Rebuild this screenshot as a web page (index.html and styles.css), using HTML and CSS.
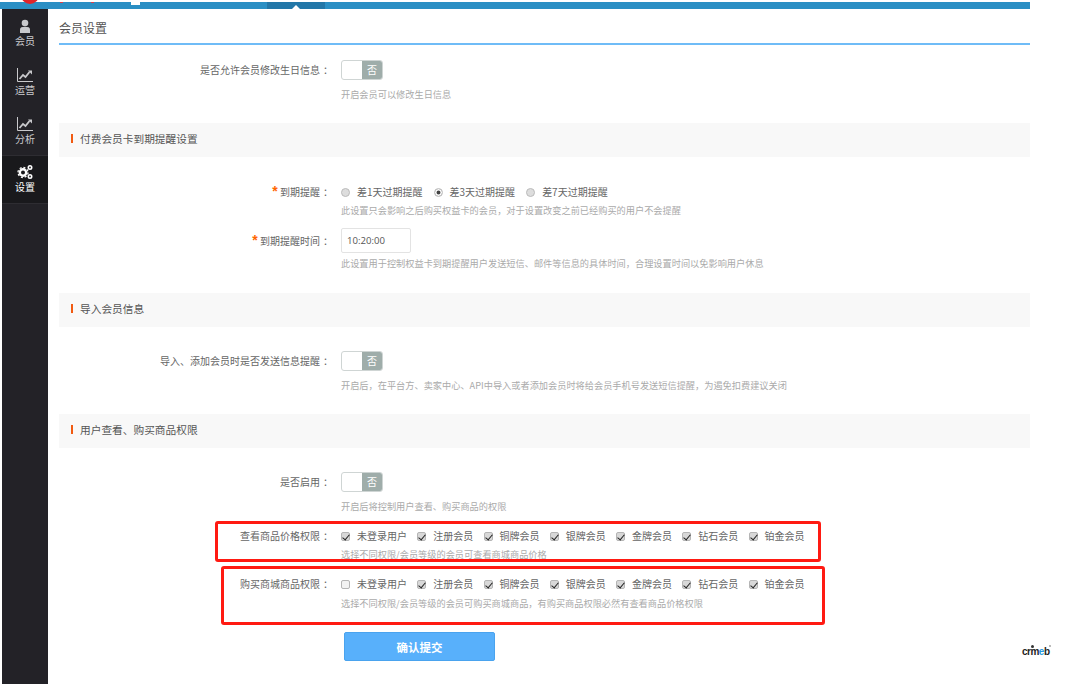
FILE: index.html
```html
<!DOCTYPE html>
<html lang="zh-CN">
<head>
  <meta charset="UTF-8" />
  <title>会员设置</title>
  <link rel="stylesheet" href="styles.css">
</head>
<body>
  <div class="topbar">
    <span class="logo-dot"></span>
    <span class="logo-bit logo-bit-a"></span>
    <span class="logo-bit logo-bit-b"></span>
    <span class="menu-bit"></span>
    <span class="tab-active"><i class="tab-notch"></i></span>
  </div>

  <div class="layout">
    <div class="sidebar">
      <div class="side-item">
        <svg class="side-icon" viewBox="0 0 16 16"><circle cx="8" cy="5" r="3.300" fill="#c9c9cc"/><path d="M3 15v-3.500C3 9.500 4.800 8.800 8 8.800s5 .7 5 2.700V15z" fill="#c9c9cc"/></svg>
        <span>会员</span>
      </div>
      <div class="side-item">
        <svg class="side-icon" viewBox="0 0 16 16"><path d="M.5 1v13.500H16" fill="none" stroke="#c9c9cc" stroke-width="1"/><path d="M2.500 12l3.500-4 2.500 2 4-5" fill="none" stroke="#c9c9cc" stroke-width="1.800"/><path d="M11 3.500h4v4z" fill="#c9c9cc"/></svg>
        <span>运营</span>
      </div>
      <div class="side-item">
        <svg class="side-icon" viewBox="0 0 16 16"><path d="M.5 1v13.500H16" fill="none" stroke="#c9c9cc" stroke-width="1"/><path d="M2.500 12l3.500-4 2.500 2 4-5" fill="none" stroke="#c9c9cc" stroke-width="1.800"/><path d="M11 3.500h4v4z" fill="#c9c9cc"/></svg>
        <span>分析</span>
      </div>
      <div class="side-item side-item-on">
        <svg class="side-icon" viewBox="0 0 16 16">
          <circle cx="6" cy="8.500" r="3.200" fill="none" stroke="#fff" stroke-width="2.400"/>
          <circle cx="6" cy="8.500" r="5" fill="none" stroke="#fff" stroke-width="1.300" stroke-dasharray="2 1.900"/>
          <circle cx="13" cy="3.500" r="1.700" fill="none" stroke="#fff" stroke-width="1.600"/>
          <circle cx="13" cy="12.500" r="1.700" fill="none" stroke="#fff" stroke-width="1.600"/>
        </svg>
        <span>设置</span>
      </div>
    </div>

    <div class="main">
      <div class="page-title">会员设置</div>

      <div class="form-row row-first">
        <div class="label">是否允许会员修改生日信息<span class="colon">：</span></div>
        <div class="field">
          <div class="switch"><span class="switch-knob"></span><span class="switch-text">否</span></div>
          <div class="help help-switch">开启会员可以修改生日信息</div>
        </div>
      </div>

      <div class="section-head"><span>付费会员卡到期提醒设置</span></div>

      <div class="form-row row-radio">
        <div class="label label-opts"><em>*</em> 到期提醒<span class="colon">：</span></div>
        <div class="field">
          <div class="options">
            <label class="opt-radio"><i class="radio"></i>差1天过期提醒</label>
            <label class="opt-radio"><i class="radio radio-on"></i>差3天过期提醒</label>
            <label class="opt-radio"><i class="radio"></i>差7天过期提醒</label>
          </div>
          <div class="help help-opts">此设置只会影响之后购买权益卡的会员，对于设置改变之前已经购买的用户不会提醒</div>
        </div>
      </div>

      <div class="form-row row-time">
        <div class="label label-input"><em>*</em> 到期提醒时间<span class="colon">：</span></div>
        <div class="field">
          <div class="time-input">10:20:00</div>
          <div class="help help-time">此设置用于控制权益卡到期提醒用户发送短信、邮件等信息的具体时间，合理设置时间以免影响用户休息</div>
        </div>
      </div>

      <div class="section-head head-import"><span>导入会员信息</span></div>

      <div class="form-row row-import">
        <div class="label">导入、添加会员时是否发送信息提醒<span class="colon">：</span></div>
        <div class="field">
          <div class="switch"><span class="switch-knob"></span><span class="switch-text">否</span></div>
          <div class="help help-switch">开启后，在平台方、卖家中心、API中导入或者添加会员时将给会员手机号发送短信提醒，为遏免扣费建议关闭</div>
        </div>
      </div>

      <div class="section-head head-perm"><span>用户查看、购买商品权限</span></div>

      <div class="form-row row-enable">
        <div class="label">是否启用<span class="colon">：</span></div>
        <div class="field">
          <div class="switch"><span class="switch-knob"></span><span class="switch-text">否</span></div>
          <div class="help help-switch">开启后将控制用户查看、购买商品的权限</div>
        </div>
      </div>

      <div class="form-row row-view">
        <div class="label label-opts">查看商品价格权限<span class="colon">：</span></div>
        <div class="field">
          <div class="options">
            <label class="opt-check"><i class="check check-on"></i>未登录用户</label>
            <label class="opt-check"><i class="check check-on"></i>注册会员</label>
            <label class="opt-check"><i class="check check-on"></i>铜牌会员</label>
            <label class="opt-check"><i class="check check-on"></i>银牌会员</label>
            <label class="opt-check"><i class="check check-on"></i>金牌会员</label>
            <label class="opt-check"><i class="check check-on"></i>钻石会员</label>
            <label class="opt-check"><i class="check check-on"></i>铂金会员</label>
          </div>
          <div class="help help-opts">选择不同权限/会员等级的会员可查看商城商品价格</div>
        </div>
      </div>

      <div class="form-row row-buy">
        <div class="label label-opts">购买商城商品权限<span class="colon">：</span></div>
        <div class="field">
          <div class="options">
            <label class="opt-check"><i class="check"></i>未登录用户</label>
            <label class="opt-check"><i class="check check-on"></i>注册会员</label>
            <label class="opt-check"><i class="check check-on"></i>铜牌会员</label>
            <label class="opt-check"><i class="check check-on"></i>银牌会员</label>
            <label class="opt-check"><i class="check check-on"></i>金牌会员</label>
            <label class="opt-check"><i class="check check-on"></i>钻石会员</label>
            <label class="opt-check"><i class="check check-on"></i>铂金会员</label>
          </div>
          <div class="help help-buy">选择不同权限/会员等级的会员可购买商城商品，有购买商品权限必然有查看商品价格权限</div>
        </div>
      </div>

      <div class="submit-row"><button class="submit">确认提交</button></div>
    </div>
  </div>

  <!-- red marks drawn on top of the screenshot -->
  <div class="mark mark-view"></div>
  <div class="mark mark-buy"></div>

  <div class="brand"><i class="brand-head"></i><i class="brand-reg"></i>crm<span>e</span>b</div>
</body>
</html>
```

FILE: styles.css
```css
* {
  box-sizing: border-box;
  margin: 0;
  padding: 0;
}
html, body {
  height: 684px;
  overflow: hidden;
}
body {
  position: relative;
  background: #fff;
  padding-top: 2px;
  font-family: "Noto Sans CJK SC", "Noto Sans", sans-serif;
  font-size: 10px;
  color: #666;
}
.topbar {
  position: relative;
  width: 1030px;
  height: 7px;
  background: #2a8fc4;
}
.logo-dot {
  position: absolute;
  left: 21px;
  top: -16px;
  width: 18px;
  height: 18px;
  border-radius: 50%;
  background: #e0252b;
}
.logo-bit {
  position: absolute;
  top: 0;
  width: 3px;
  height: 1px;
  background: #d9404a;
}
.logo-bit-a { left: 60px; }
.logo-bit-b { left: 91px; }
.menu-bit {
  position: absolute;
  left: 131px;
  top: 0;
  width: 9px;
  height: 3px;
  background: #fff;
}
.tab-active {
  position: absolute;
  left: 267px;
  top: 0;
  width: 58px;
  height: 7px;
  background: #2277a8;
}
.tab-notch {
  position: absolute;
  left: 25px;
  bottom: 0;
  border-left: 4px solid transparent;
  border-right: 4px solid transparent;
  border-bottom: 4px solid #fff;
}
.layout {
  display: flex;
  width: 1030px;
  height: 675px;
  padding-left: 2px;
}
.sidebar {
  flex: none;
  width: 46px;
  background: #232227;
  color: #c9c9cc;
}
.side-item {
  display: flex;
  flex-direction: column;
  align-items: center;
  height: 49px;
  padding-top: 9px;
  font-size: 10px;
  line-height: 14px;
}
.side-item-on {
  margin-top: -1px;
  border-top: 1px solid #2e2d32;
  border-bottom: 1px solid #2e2d32;
  padding-top: 8px;
  background: #19191c;
  color: #fff;
}
.side-icon {
  display: block;
  width: 16px;
  height: 16px;
}
.main {
  flex: 1;
  padding-left: 11px;
}
.page-title {
  height: 36px;
  border-bottom: 2px solid #6fbcf7;
  padding-top: 10px;
  font-size: 12px;
  line-height: 18px;
  color: #555;
}
.form-row {
  display: grid;
  grid-template-columns: 271px 1fr;
  column-gap: 11px;
}
.label {
  text-align: right;
  line-height: 20px;
  color: #666;
}
.label em {
  font-family: "Liberation Sans", sans-serif;
  font-size: 14px;
  font-style: normal;
  font-weight: bold;
  line-height: 0;
  color: #f60;
}
.label-opts {
  line-height: 14px;
}
.label-input {
  line-height: 25px;
}
.colon {
  margin: 0 -3px 0 3px;
}
.row-first { margin-top: 15px; height: 63px; }
.row-radio { margin-top: 28px; }
.row-time { margin-top: 11px; }
.row-import { margin-top: 24px; }
.row-enable { margin-top: 24px; }
.row-view { margin-top: 16px; }
.row-buy { margin-top: 16px; }
.help {
  font-family: "Noto Sans CJK TC", "Noto Sans CJK SC", sans-serif;
  line-height: 14px;
  font-size: 9.200px;
  color: #aaa;
}
.help-switch { margin-top: 7px; }
.help-time { margin-top: 3px; }
.help-opts { margin-top: 4px; }
.help-buy { margin-top: 5px; }
.switch {
  display: flex;
  width: 42px;
  height: 20px;
  border: 1px solid #cfd5d4;
  border-radius: 3px;
  overflow: hidden;
  background: #fff;
}
.switch-knob {
  flex: none;
  width: 20px;
}
.switch-text {
  flex: 1;
  background: #9fadaa;
  color: #fff;
  font-size: 10px;
  line-height: 18px;
  text-align: center;
}
.section-head {
  height: 34px;
  background: #f8f8f8;
  padding: 0 12px;
  font-size: 10.700px;
  line-height: 32px;
  color: #555;
}
.section-head span {
  display: inline-block;
  border-left: 2px solid #f15a11;
  padding-left: 7px;
  line-height: 9px;
}
.head-import { margin-top: 23px; }
.head-perm { margin-top: 22px; }
.options {
  display: flex;
  align-items: center;
  height: 14px;
  line-height: 14px;
}
.opt-radio, .opt-check {
  display: flex;
  align-items: center;
  color: #666;
}
.opt-radio { margin-right: 11px; }
.opt-check { margin-right: 10.250px; }
.radio {
  flex: none;
  width: 9px;
  height: 9px;
  margin: 0 7px 0 0;
  border: 1px solid #bbb;
  border-radius: 50%;
  background: #ddd;
}
.radio-on {
  background: #fff;
  box-shadow: inset 0 0 0 1.500px #fff, inset 0 0 0 4px #444;
}
.check {
  position: relative;
  flex: none;
  width: 9px;
  height: 9px;
  margin: 0 7px 0 0;
  border: 1px solid #b5b5b5;
  border-radius: 2px;
  background: #f2f2f2;
}
.check-on {
  background: #d8d8d8;
}
.check-on::after {
  content: "";
  position: absolute;
  left: 2px;
  top: 0;
  width: 3px;
  height: 6px;
  border: solid #222;
  border-width: 0 1.500px 1.500px 0;
  transform: rotate(40deg);
}
.time-input {
  width: 70px;
  height: 25px;
  border: 1px solid #e3e3e3;
  border-radius: 2px;
  padding-left: 5px;
  font-family: "Open Sans", sans-serif;
  font-size: 9.600px;
  line-height: 24px;
  color: #555;
}
.submit-row {
  padding-left: 285px;
  margin-top: 22px;
}
.submit {
  display: block;
  width: 151px;
  height: 29px;
  border: 1px solid #4aa3ee;
  border-radius: 2px;
  background: #58b0fb;
  color: #fff;
  font-family: inherit;
  font-size: 11.500px;
  font-weight: bold;
}
.mark {
  position: absolute;
  border: 3px solid #ff1a12;
  border-radius: 3px;
}
.mark-view {
  left: 215px;
  top: 521px;
  width: 606px;
  height: 41px;
}
.mark-buy {
  left: 221px;
  top: 566px;
  width: 604px;
  height: 59px;
}
.brand {
  position: absolute;
  left: 1022px;
  top: 646px;
  font-family: "Liberation Sans", sans-serif;
  font-size: 10px;
  font-weight: bold;
  letter-spacing: -0.500px;
  line-height: 12px;
  color: #222;
}
.brand span {
  color: #2a9ae0;
}
.brand-head {
  position: absolute;
  left: 9px;
  top: -1px;
  width: 3px;
  height: 3px;
  border-radius: 50%;
  background: #333;
}
.brand-reg {
  position: absolute;
  right: -1px;
  top: -1px;
  width: 2px;
  height: 2px;
  background: #bbb;
}
```
